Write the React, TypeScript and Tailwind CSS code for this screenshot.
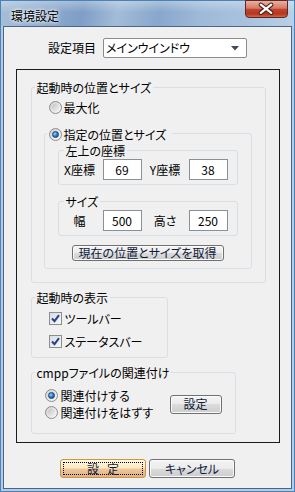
import React from "react";

const BG = "bg-[#f0f0f0]";

function Radio({ checked }: { checked?: boolean }) {
  return (
    <span className="w-[13px] h-[13px] shrink-0 rounded-full border border-[#8d8d8d] bg-[linear-gradient(135deg,#cfcfcf,#fbfbfb)] flex items-center justify-center">
      {checked ? (
        <span className="w-[7px] h-[7px] rounded-full border border-[#1e3f6e] bg-[radial-gradient(circle_at_35%_35%,#9fdcff_0%,#2a86d8_45%,#0c3f86_100%)]"></span>
      ) : (
        <span className="w-[7px] h-[7px] rounded-full bg-[linear-gradient(135deg,#c4c4c4,#f2f2f2)]"></span>
      )}
    </span>
  );
}

function Check() {
  return (
    <span className="w-[13px] h-[13px] shrink-0 border border-[#8d8d8d] bg-[linear-gradient(135deg,#d8dce2,#f8f8f8)] flex items-center justify-center">
      <svg width="11" height="11" viewBox="0 0 11 11">
        <path d="M2 5.5 L4.5 8.2 L9 2.2" stroke="#23418f" strokeWidth="2" fill="none" />
      </svg>
    </span>
  );
}

function Button({ children, className }: { children: React.ReactNode; className: string }) {
  return (
    <div
      className={`rounded-[3px] border border-[#707070] bg-[linear-gradient(180deg,#f4f4f4_0%,#ebebeb_50%,#dcdcdc_50%,#cdcdcd_100%)] shadow-[inset_0_0_0_1px_#fbfbfb] flex items-center justify-center text-[#101a3a] ${className}`}
    >
      {children}
    </div>
  );
}

function Legend({ children, className }: { children: React.ReactNode; className?: string }) {
  return <div className={`-mt-[7px] ml-[3px] px-[2px] w-fit h-[14px] leading-[14px] ${BG} ${className ?? ""}`}>{children}</div>;
}

function Input({ value }: { value: string }) {
  return (
    <div className="w-[39px] h-[21px] border border-[#8a9099] bg-white flex items-center justify-center">{value}</div>
  );
}

export default function App() {
  return (
    <div className="w-[295px] h-[492px] flex flex-col border border-[#4a82bb] bg-[#b3cbe4] text-[12px] leading-[14px] text-black font-['Noto_Sans_CJK_JP',sans-serif] [font-feature-settings:'palt']">
      {/* title bar */}
      <div className="h-[25px] shrink-0 flex items-start bg-[linear-gradient(180deg,rgba(255,255,255,0.3)_0%,rgba(255,255,255,0)_45%),linear-gradient(100deg,#a7bfd8_0%,#92aecf_14%,#7e9ec6_28%,#a3bcd8_40%,#87a7cc_54%,#9fbad8_68%,#a8c2de_84%,#b9d0e6_100%)]">
        <span className="pl-[10px] pt-[8px] [text-shadow:0_0_5px_#ffffff,0_0_3px_#ffffff]">環境設定</span>
        <div className="ml-auto mr-[6px] -mt-[1px] w-[43px] h-[18px] rounded-b-[4px] border border-[#5a2a22] bg-[linear-gradient(180deg,#eab0a2_0%,#d67a66_45%,#c3432c_52%,#b63520_80%,#d0674c_100%)] flex items-center justify-center">
          <svg width="43" height="18" viewBox="0 0 43 18">
            <path d="M15.5 4.5 L26.5 13 M26.5 4.5 L15.5 13" stroke="#4a1a12" strokeWidth="4.5" strokeLinecap="round" />
            <path d="M15.5 4.5 L26.5 13 M26.5 4.5 L15.5 13" stroke="#ffffff" strokeWidth="2.4" strokeLinecap="round" />
          </svg>
        </div>
      </div>

      {/* client */}
      <div className={`flex-1 mx-[2px] mb-[2px] border border-[#4d6685] ${BG} flex flex-col items-center`}>
        <div className="mt-[11px] flex items-center gap-[7px]">
          <span>設定項目</span>
          <div className="w-[144px] h-[20px] border border-[#8c8c8c] rounded-[2px] bg-white flex items-center pl-[2px] pr-[7px]">
            <span>メインウインドウ</span>
            <svg className="ml-auto" width="8" height="5" viewBox="0 0 8 5">
              <path d="M0 0 L8 0 L4 4.5 Z" fill="#3d4b5e" />
            </svg>
          </div>
        </div>

        <div className="mt-[11px] w-[264px] h-[374px] shrink-0 border border-[#1a1a1a] flex flex-col">
          {/* group 1 */}
          <div className="mt-[17px] ml-[14px] w-[235px] border border-[#d5dfe5] rounded-[3px] flex flex-col pb-[13px]">
            <Legend>起動時の位置とサイズ</Legend>
            <div className="mt-[5px] h-[15px] pl-[17px] flex items-center gap-[2px]">
              <Radio />
              <span>最大化</span>
            </div>
            <div className="mt-[18px] ml-[12px] w-[208px] border border-[#d5dfe5] rounded-[3px] flex flex-col pb-[7px]">
              <div className={`-mt-[7px] ml-[2px] pl-[2px] pr-[6px] w-fit h-[15px] flex items-center gap-[2px] ${BG}`}>
                <Radio checked />
                <span>指定の位置とサイズ</span>
              </div>
              <div className="mt-[8px] ml-[13px] w-[180px] border border-[#d5dfe5] rounded-[3px] flex flex-col pb-[4px]">
                <Legend className="ml-[5px]">左上の座標</Legend>
                <div className="mt-[1px] flex items-center">
                  <span className="ml-[3px] w-[36px] text-center">X座標</span>
                  <div className="ml-[5px]">
                    <Input value="69" />
                  </div>
                  <span className="w-[47px] text-center">Y座標</span>
                  <Input value="38" />
                </div>
              </div>
              <div className="mt-[16px] ml-[13px] w-[180px] border border-[#d5dfe5] rounded-[3px] flex flex-col pb-[4px]">
                <Legend className="ml-[5px]">サイズ</Legend>
                <div className="mt-[1px] flex items-center">
                  <span className="ml-[3px] w-[36px] text-center">幅</span>
                  <div className="ml-[5px]">
                    <Input value="500" />
                  </div>
                  <span className="w-[47px] text-center">高さ</span>
                  <Input value="250" />
                </div>
              </div>
              <Button className="mt-[9px] self-center w-[152px] h-[16px]">現在の位置とサイズを取得</Button>
            </div>
          </div>

          {/* group 2 */}
          <div className="mt-[14px] ml-[14px] w-[137px] border border-[#d5dfe5] rounded-[3px] flex flex-col pb-[8px]">
            <Legend>起動時の表示</Legend>
            <div className="mt-[6px] h-[15px] pl-[17px] flex items-center gap-[3px]">
              <Check />
              <span>ツールバー</span>
            </div>
            <div className="mt-[8px] h-[15px] pl-[17px] flex items-center gap-[3px]">
              <Check />
              <span>ステータスバー</span>
            </div>
          </div>

          {/* group 3 */}
          <div className="mt-[14px] ml-[14px] w-[205px] border border-[#d5dfe5] rounded-[3px] flex flex-col pb-[13px]">
            <Legend>cmppファイルの関連付け</Legend>
            <div className="mt-[8px] pl-[13px] flex items-center">
              <div className="w-[125px] flex flex-col">
                <div className="h-[15px] flex items-center gap-[3px]">
                  <Radio checked />
                  <span>関連付けする</span>
                </div>
                <div className="mt-[2px] h-[15px] flex items-center gap-[3px]">
                  <Radio />
                  <span>関連付けをはずす</span>
                </div>
              </div>
              <Button className="w-[52px] h-[19px]">設定</Button>
            </div>
          </div>
        </div>

        <div className="mt-[16px] flex gap-[3px]">
          <div className="w-[86px] h-[19px] rounded-[3px] border border-[#c9973f] bg-[linear-gradient(180deg,#fff8e0_0%,#fbeac4_48%,#efc89c_52%,#e3b088_100%)] p-[2px]">
            <div className="w-full h-full border border-dotted border-black flex items-center justify-center gap-[8px] text-[#101a3a]">
              <span>設</span>
              <span>定</span>
            </div>
          </div>
          <Button className="w-[86px] h-[19px]">キャンセル</Button>
        </div>
      </div>
    </div>
  );
}
